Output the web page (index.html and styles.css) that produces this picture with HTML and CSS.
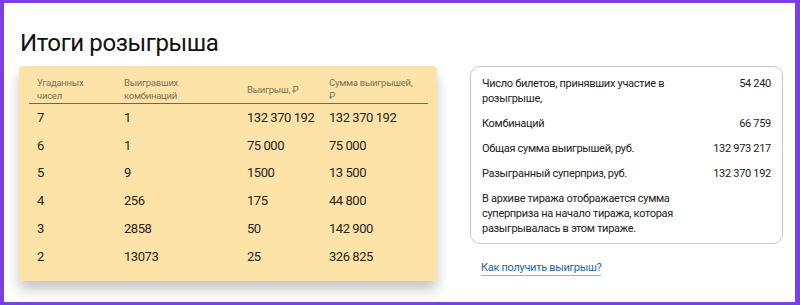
FILE: index.html
```html
<!DOCTYPE html>
<html lang="ru">
<head>
<meta charset="utf-8">
<link rel="stylesheet" href="styles.css">
</head>
<body>
<div class="frame">
  <h1 class="title">Итоги розыгрыша</h1>
  <div class="content">
    <div class="prize-card">
      <table class="prize-table">
        <thead>
          <tr>
            <th class="c1">Угаданных<br>чисел</th>
            <th class="c2">Выигравших<br>комбинаций</th>
            <th class="c3">Выигрыш, ₽</th>
            <th class="c4">Сумма выигрышей,<br>₽</th>
          </tr>
        </thead>
        <tbody>
          <tr><td>7</td><td>1</td><td>132 370 192</td><td>132 370 192</td></tr>
          <tr><td>6</td><td>1</td><td>75 000</td><td>75 000</td></tr>
          <tr><td>5</td><td>9</td><td>1500</td><td>13 500</td></tr>
          <tr><td>4</td><td>256</td><td>175</td><td>44 800</td></tr>
          <tr><td>3</td><td>2858</td><td>50</td><td>142 900</td></tr>
          <tr><td>2</td><td>13073</td><td>25</td><td>326 825</td></tr>
        </tbody>
      </table>
    </div>
    <div class="side">
      <div class="info-card">
        <div class="info-row"><span class="label">Число билетов, принявших участие в розыгрыше,</span><span class="value">54 240</span></div>
        <div class="info-row"><span class="label">Комбинаций</span><span class="value">66 759</span></div>
        <div class="info-row"><span class="label">Общая сумма выигрышей, руб.</span><span class="value">132 973 217</span></div>
        <div class="info-row"><span class="label">Разыгранный суперприз, руб.</span><span class="value">132 370 192</span></div>
        <p class="note">В архиве тиража отображается сумма суперприза на начало тиража, которая разыгрывалась в этом тираже.</p>
      </div>
      <a class="how-link" href="#">Как получить выигрыш?</a>
    </div>
  </div>
</div>
</body>
</html>
```
FILE: styles.css
```css
html, body {
  margin: 0;
  padding: 0;
}
body {
  font-family: Roboto, "Liberation Sans", sans-serif;
  color: #222;
  background: #7b3fe8;
}
.frame {
  box-sizing: border-box;
  width: 800px;
  height: 305px;
  border-style: solid;
  border-color: #7b3fe8;
  border-width: 3px 5px 3px 4px;
  background: #fff;
  padding: 0 0 0 15px;
  overflow: hidden;
}
.title {
  margin: 25px 0 0 1px;
  font-size: 24px;
  font-weight: 400;
  line-height: 30px;
  color: #111;
  letter-spacing: -0.4px;
}
.content {
  display: flex;
  align-items: flex-start;
  margin-top: 8px;
}
.prize-card {
  width: 418px;
  height: 215px;
  box-sizing: border-box;
  background: #fee3a9;
  border-radius: 4px;
  box-shadow: 0 9px 13px rgba(0, 0, 0, 0.22);
  padding: 9px 9px 0 10px;
}
.prize-table {
  width: 399px;
  border-collapse: collapse;
  table-layout: fixed;
}
.prize-table th {
  font-size: 9.5px;
  font-weight: 400;
  letter-spacing: -0.25px;
  color: #7f7058;
  text-align: left;
  line-height: 13px;
  padding: 1px 0 1px 8px;
  border-bottom: 1px solid #7a6442;
  vertical-align: middle;
  white-space: nowrap;
}
.prize-table .c1 { width: 79px; }
.prize-table .c2 { width: 115px; }
.prize-table .c3 { width: 74px; }
.prize-table td {
  font-size: 13px;
  letter-spacing: -0.45px;
  line-height: 18px;
  height: 27.8px;
  padding: 0 0 0 8px;
  color: #2a2418;
  vertical-align: middle;
  white-space: nowrap;
}
.side {
  margin-left: 33px;
  width: 313px;
}
.info-card {
  box-sizing: border-box;
  width: 313px;
  border: 1px solid #c9c9c9;
  border-radius: 10px;
  padding: 9px 11px 7px 11px;
  font-size: 11px;
  letter-spacing: -0.3px;
  line-height: 15px;
  color: #222;
}
.info-row {
  display: flex;
  justify-content: space-between;
  margin-bottom: 10px;
}
.info-row .label {
  width: 196px;
}
.info-row .value {
  text-align: right;
}
.note {
  margin: 0;
  width: 200px;
}
.how-link {
  display: inline-block;
  margin: 16px 0 0 11px;
  font-size: 11px;
  letter-spacing: -0.3px;
  line-height: 15px;
  color: #2866a8;
  text-decoration: none;
  border-bottom: 1px solid #8fb3d9;
}
```
